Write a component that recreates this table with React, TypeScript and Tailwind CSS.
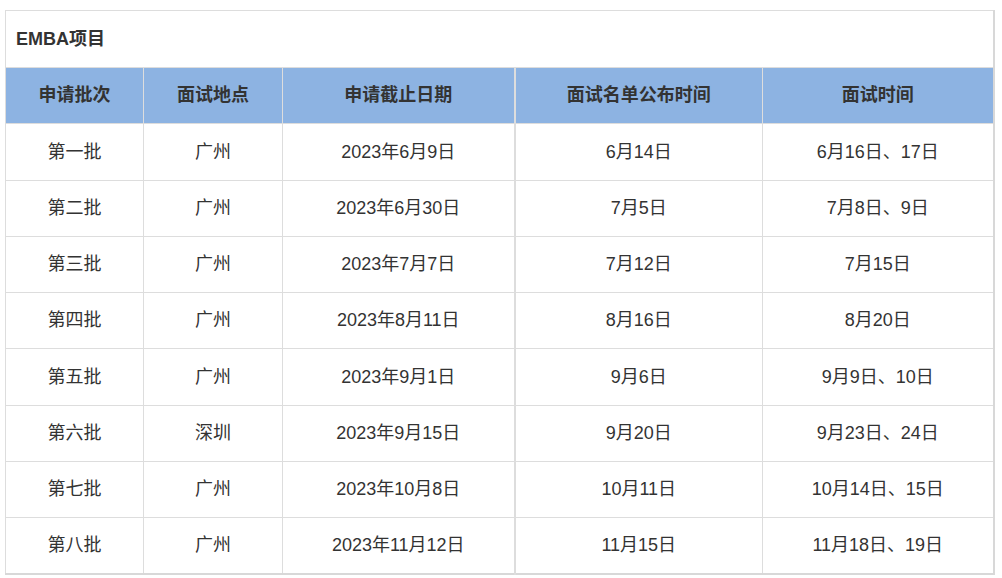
import React from 'react';

const rows = [
  ['第一批', '广州', '2023年6月9日', '6月14日', '6月16日、17日'],
  ['第二批', '广州', '2023年6月30日', '7月5日', '7月8日、9日'],
  ['第三批', '广州', '2023年7月7日', '7月12日', '7月15日'],
  ['第四批', '广州', '2023年8月11日', '8月16日', '8月20日'],
  ['第五批', '广州', '2023年9月1日', '9月6日', '9月9日、10日'],
  ['第六批', '深圳', '2023年9月15日', '9月20日', '9月23日、24日'],
  ['第七批', '广州', '2023年10月8日', '10月11日', '10月14日、15日'],
  ['第八批', '广州', '2023年11月12日', '11月15日', '11月18日、19日'],
];

const headers = ['申请批次', '面试地点', '申请截止日期', '面试名单公布时间', '面试时间'];
const widths = ['w-[138px]', 'w-[139px]', 'w-[232px]', 'w-[248px]', 'w-[231px]'];

export default function App() {
  return (
    <div
      className="min-h-screen bg-white pt-[10px] pl-[5px] text-[#333]"
      style={{ fontFamily: '"Liberation Sans", Arial, "Noto Sans CJK SC", sans-serif' }}
    >
      <table className="w-[989px] table-fixed border-collapse border-b-2 border-r-2 border-b-[#d8d8d8] border-r-[#d8d8d8]">
        <colgroup>
          {widths.map((w, i) => (
            <col key={i} className={w} />
          ))}
        </colgroup>
        <tbody>
          <tr className="h-[57px]">
            <td colSpan={5} className="border border-[#dddddd] pl-[10px] text-left text-[18px] font-bold">
              EMBA项目
            </td>
          </tr>
          <tr className="h-[56px] bg-[#8db3e2]">
            {headers.map((h, i) => (
              <th
                key={h}
                className={`border border-[#dddddd] text-center text-[18px] font-bold ${i === 2 ? 'border-r-2' : ''}`}
              >
                {h}
              </th>
            ))}
          </tr>
          {rows.map((r, ri) => (
            <tr key={ri} className={ri === 0 || ri === 4 ? 'h-[57px]' : 'h-[56px]'}>
              {r.map((c, ci) => (
                <td
                  key={ci}
                  className={`border border-[#dddddd] text-center text-[18px] ${ci === 2 ? 'border-r-2' : ''}`}
                >
                  {c}
                </td>
              ))}
            </tr>
          ))}
        </tbody>
      </table>
    </div>
  );
}
